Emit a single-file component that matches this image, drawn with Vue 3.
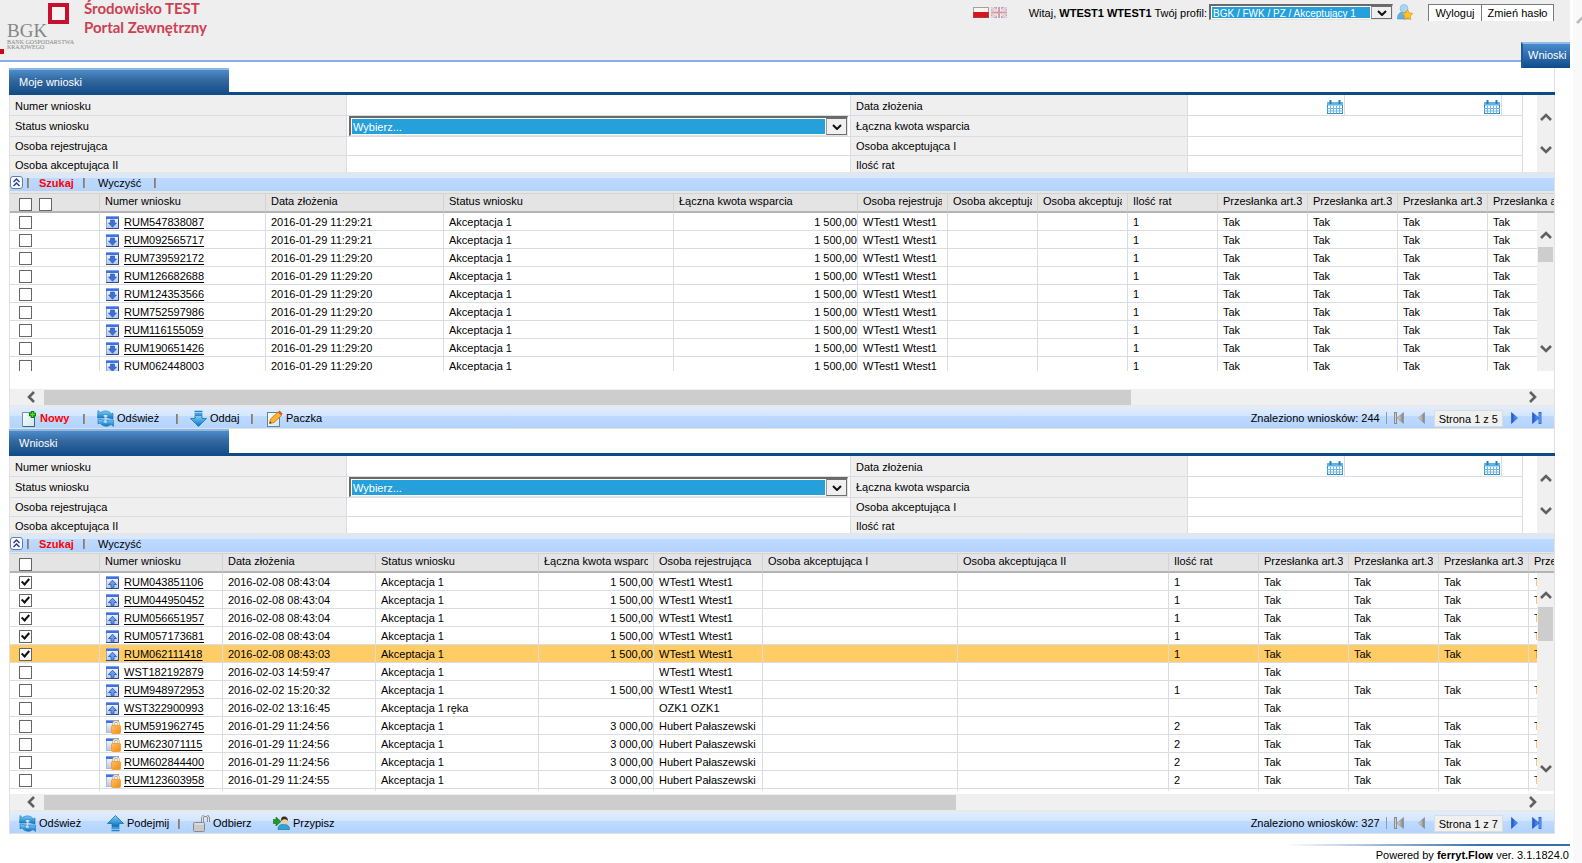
<script setup>
import { reactive } from 'vue'

const mineRows = [
  ['RUM547838087', '2016-01-29 11:29:21'],
  ['RUM092565717', '2016-01-29 11:29:21'],
  ['RUM739592172', '2016-01-29 11:29:20'],
  ['RUM126682688', '2016-01-29 11:29:20'],
  ['RUM124353566', '2016-01-29 11:29:20'],
  ['RUM752597986', '2016-01-29 11:29:20'],
  ['RUM116155059', '2016-01-29 11:29:20'],
  ['RUM190651426', '2016-01-29 11:29:20'],
  ['RUM062448003', '2016-01-29 11:29:20']
].map(([id, date]) => ({
  id, date, icon: 'row-down', checked: false, status: 'Akceptacja 1',
  amount: '1 500,00', person: 'WTest1 Wtest1', count: '1', flags: ['Tak', 'Tak', 'Tak', 'Tak']
}))

const all = ['Tak', 'Tak', 'Tak', 'Tak']
const one = ['Tak', '', '', '']
const w = 'WTest1 Wtest1'
const hp = 'Hubert Pałaszewski'
const queueRows = [
  ['RUM043851106', '2016-02-08 08:43:04', 'row-up', true, 'Akceptacja 1', '1 500,00', w, '1', all],
  ['RUM044950452', '2016-02-08 08:43:04', 'row-up', true, 'Akceptacja 1', '1 500,00', w, '1', all],
  ['RUM056651957', '2016-02-08 08:43:04', 'row-up', true, 'Akceptacja 1', '1 500,00', w, '1', all],
  ['RUM057173681', '2016-02-08 08:43:04', 'row-up', true, 'Akceptacja 1', '1 500,00', w, '1', all],
  ['RUM062111418', '2016-02-08 08:43:03', 'row-up', true, 'Akceptacja 1', '1 500,00', w, '1', all],
  ['WST182192879', '2016-02-03 14:59:47', 'row-up', false, 'Akceptacja 1', '', w, '', one],
  ['RUM948972953', '2016-02-02 15:20:32', 'row-up', false, 'Akceptacja 1', '1 500,00', w, '1', all],
  ['WST322900993', '2016-02-02 13:16:45', 'row-up', false, 'Akceptacja 1 ręka', '', 'OZK1 OZK1', '', one],
  ['RUM591962745', '2016-01-29 11:24:56', 'row-lock', false, 'Akceptacja 1', '3 000,00', hp, '2', all],
  ['RUM623071115', '2016-01-29 11:24:56', 'row-lock', false, 'Akceptacja 1', '3 000,00', hp, '2', all],
  ['RUM602844400', '2016-01-29 11:24:56', 'row-lock', false, 'Akceptacja 1', '3 000,00', hp, '2', all],
  ['RUM123603958', '2016-01-29 11:24:55', 'row-lock', false, 'Akceptacja 1', '3 000,00', hp, '2', all]
].map(([id, date, icon, checked, status, amount, person, count, flags], i) => ({
  id, date, icon, checked, status, amount, person, count, flags, selected: i === 4
}))

const columns = [
  'Numer wniosku', 'Data złożenia', 'Status wniosku', 'Łączna kwota wsparcia', 'Osoba rejestrująca',
  'Osoba akceptująca I', 'Osoba akceptująca II', 'Ilość rat',
  'Przesłanka art.3', 'Przesłanka art.3', 'Przesłanka art.3', 'Przesłanka art.3'
]

const panels = reactive([
  {
    key: 'mine', title: 'Moje wnioski', rows: mineRows, selectors: 2, closingBar: true,
    found: 'Znaleziono wniosków: 244', page: 'Strona 1 z 5',
    actions: [
      { icon: 'new', text: 'Nowy', hot: true }, null,
      { icon: 'refresh', text: 'Odśwież' }, null,
      { icon: 'give', text: 'Oddaj' }, null,
      { icon: 'edit', text: 'Paczka' }
    ]
  },
  {
    key: 'queue', title: 'Wnioski', rows: queueRows, selectors: 1, closingBar: false,
    found: 'Znaleziono wniosków: 327', page: 'Strona 1 z 7',
    actions: [
      { icon: 'refresh', text: 'Odśwież' },
      { icon: 'take', text: 'Podejmij' }, null,
      { icon: 'unlock', text: 'Odbierz' },
      { icon: 'assign', text: 'Przypisz' }
    ]
  }
])
</script>

<template>
  <div class="page">
    <svg class="defs" aria-hidden="true">
      <defs>
        <linearGradient id="gBlue" x1="0" y1="0" x2="0" y2="1">
          <stop offset="0" stop-color="#7ed3f7" /><stop offset="1" stop-color="#0b6fc2" />
        </linearGradient>
        <linearGradient id="gPaper" x1="0" y1="0" x2="1" y2="1">
          <stop offset="0" stop-color="#ffffff" /><stop offset="1" stop-color="#cfe6ee" />
        </linearGradient>
        <linearGradient id="gWin" x1="0" y1="0" x2="0" y2="1">
          <stop offset="0" stop-color="#ffffff" /><stop offset="1" stop-color="#b4c8ea" />
        </linearGradient>
        <linearGradient id="gLock" x1="0" y1="0" x2="1" y2="1">
          <stop offset="0" stop-color="#ffc068" /><stop offset="1" stop-color="#f08a10" />
        </linearGradient>
        <linearGradient id="gGrey" x1="0" y1="0" x2="1" y2="0">
          <stop offset="0" stop-color="#e4e4e4" /><stop offset="1" stop-color="#7d7d7d" />
        </linearGradient>
        <linearGradient id="gNav" x1="0" y1="0" x2="1" y2="0">
          <stop offset="0" stop-color="#1c50c8" /><stop offset="1" stop-color="#5fa8ff" />
        </linearGradient>
      </defs>
      <symbol id="row-down" viewBox="0 0 13 13">
        <rect x="0.5" y="0.5" width="12" height="12" fill="url(#gWin)" stroke="#8ea6d8" />
        <rect width="13" height="3" fill="#3f72e0" /><rect width="13" height="1" fill="#7ba0f2" />
        <path d="M12.5 3v9.500H0" fill="none" stroke="#2f4a86" />
        <path d="M4.500 4h4v3h2L6.500 11.300 2.500 7h2z" fill="#3a6fe0" stroke="#2450a8" stroke-width=".6" />
      </symbol>
      <symbol id="row-up" viewBox="0 0 13 13">
        <rect x="0.5" y="0.5" width="12" height="12" fill="url(#gWin)" stroke="#8ea6d8" />
        <rect width="13" height="3" fill="#3f72e0" /><rect width="13" height="1" fill="#7ba0f2" />
        <path d="M12.5 3v9.500H0" fill="none" stroke="#2f4a86" />
        <path d="M5 11.300h3V8.500h2.500L6.500 4.200 2.500 8.500H5z" fill="#6c9cf0" stroke="#2450a8" stroke-width=".8" />
      </symbol>
      <symbol id="row-lock" viewBox="0 0 15 14">
        <rect x="0.5" y="0.500" width="12" height="12" fill="url(#gWin)" stroke="#a9b8dc" />
        <rect width="13" height="3" fill="#3f72e0" /><rect width="13" height="1" fill="#7ba0f2" />
        <path d="M7.500 6V4a2.500 2.500 0 0 1 5 0V6" fill="none" stroke="#b5a98c" stroke-width="2.400" />
        <path d="M7.500 6V4a2.500 2.500 0 0 1 5 0V6" fill="none" stroke="#f4ecd8" stroke-width="1.200" />
        <rect x="5.500" y="5.500" width="9" height="8" rx="1" fill="url(#gLock)" stroke="#f5a030" />
      </symbol>
      <symbol id="new" viewBox="0 0 17 17">
        <path d="M2.500 2.500h9l3 3v11h-12z" fill="url(#gPaper)" stroke="#6d93a3" />
        <path d="M14.500 5v11.500H3" fill="none" stroke="#3f6677" />
        <path d="M12.500 1v7M9 4.500h7" stroke="#0a7d0a" stroke-width="3.500" />
        <path d="M12.500 2v5M10 4.500h5" stroke="#4fe02f" stroke-width="1.500" />
      </symbol>
      <symbol id="refresh" viewBox="0 0 17 17">
        <path d="M1 .5l2.500 2C7 0 12 .5 14.500 4L16 3v6l-6.500-1.500 2-1.500C10 4 7 4 6 5.500L7.500 8H.5z" fill="url(#gBlue)" stroke="#1876b8" stroke-width=".6" />
        <path d="M16.500 16.500L14 14.500c-3.500 3-8.500 2-11-1.500l-2 1V9l6.500 1-2 1.800c1.500 2 4 2 5.500.7L9.500 10h7z" fill="url(#gBlue)" stroke="#1876b8" stroke-width=".6" />
      </symbol>
      <symbol id="give" viewBox="0 0 17 17">
        <path d="M4.500 1.500h8M4.500 4h8" stroke="#1d84c6" stroke-width="1.500" />
        <path d="M5 5.500h7v3h4.500L8.500 16.500 .5 8.500H5z" fill="url(#gBlue)" stroke="#1670b0" stroke-width=".8" />
      </symbol>
      <symbol id="take" viewBox="0 0 17 17">
        <path d="M4.500 15.500h8M4.500 13h8" stroke="#1d84c6" stroke-width="1.500" />
        <path d="M5 11.500h7v-3h4.500L8.500 .5 .5 8.500H5z" fill="url(#gBlue)" stroke="#1670b0" stroke-width=".8" />
      </symbol>
      <symbol id="edit" viewBox="0 0 17 17">
        <rect x="1.500" y="2.500" width="12" height="14" fill="url(#gPaper)" stroke="#5b8796" />
        <path d="M3.500 13.500l1-4.500L12 2l3.500 3.500-7.500 7z" fill="#ffb52e" stroke="#c56a10" stroke-width=".8" />
        <path d="M12 2l1.500-1.500L16.500 3.500 15.500 5.500z" fill="#e2553c" />
        <path d="M3.500 13.500l.5-2 1.500 1.500z" fill="#333" />
      </symbol>
      <symbol id="unlock" viewBox="0 0 17 17">
        <path d="M9.500 8V3.500a3 3 0 0 1 6 0V7" fill="none" stroke="#6f6f6f" stroke-width="2.600" />
        <path d="M9.500 8V3.500a3 3 0 0 1 6 0V7" fill="none" stroke="#e4e4e4" stroke-width="1.200" />
        <rect x="0.500" y="7.500" width="11" height="9" rx="1" fill="#c9c9c9" stroke="#8a8a8a" />
        <path d="M1.500 9h9" stroke="#f0f0f0" />
      </symbol>
      <symbol id="assign" viewBox="0 0 17 17">
        <path d="M5 14.500c0-4 2-5 5.500-5s6 1 6 5z" fill="#2ea6cf" stroke="#177ba3" stroke-width=".7" />
        <circle cx="11.500" cy="6" r="3.200" fill="#f2c9a0" />
        <path d="M8 6c0-4 1.500-4.500 3.500-4.500S15 3 15 6c-1.500-2-4.500-2.500-7 0z" fill="#3b2a20" />
        <path d="M.3 4.500h2.700V2L8 6.500 3 11V8.500H.3z" fill="#1f9a2a" stroke="#0c6b18" stroke-width=".6" />
      </symbol>
      <symbol id="calendar" viewBox="0 0 16 14">
        <rect x="0.5" y="3" width="15" height="10.500" fill="#fff" stroke="#2b8fd0" />
        <rect y="2" width="16" height="3.500" rx="1" fill="#5fb3e6" />
        <path d="M3.500 0v4M12.500 0v4" stroke="#2b7cb8" stroke-width="2" />
        <path d="M3.500 5.500v8M6.500 5.500v8M9.500 5.500v8M12.500 5.500v8M0 8.500h16M0 11h16" stroke="#6fb9e4" />
      </symbol>
      <symbol id="collapse" viewBox="0 0 13 13">
        <rect x="0.5" y="0.500" width="12" height="12" rx="2.500" fill="#fff" stroke="#5f7fae" />
        <path d="M3.500 6l3-3 3 3M3.500 10l3-3 3 3" fill="none" stroke="#27418f" stroke-width="1.500" />
      </symbol>
      <symbol id="chev" viewBox="0 0 12 10">
        <path d="M1 8l5-5 5 5" fill="none" stroke="#606060" stroke-width="2.600" />
      </symbol>
      <symbol id="first" viewBox="0 0 10 12">
        <rect x="0.5" y="0.500" width="2" height="11" fill="#d0d0d0" stroke="#8b8b8b" />
        <path d="M9.500.5v11L3 6z" fill="url(#gGrey)" stroke="#8b8b8b" stroke-width=".6" />
      </symbol>
      <symbol id="prev" viewBox="0 0 7 12">
        <path d="M6.500.5v11L.5 6z" fill="url(#gGrey)" stroke="#8b8b8b" stroke-width=".6" />
      </symbol>
      <symbol id="next" viewBox="0 0 7 12">
        <path d="M.5.5v11l6-5.500z" fill="url(#gNav)" stroke="#1c50c8" stroke-width=".6" />
      </symbol>
      <symbol id="last" viewBox="0 0 10 12">
        <path d="M.5.5v11l6.500-5.500z" fill="url(#gNav)" stroke="#1c50c8" stroke-width=".6" />
        <rect x="7" y="0.500" width="2" height="11" fill="#7cb4ff" stroke="#1c50c8" stroke-width=".8" />
      </symbol>
    </svg>

    <div class="main">
      <header class="top">
        <div class="brand">
          <div class="logo">
            <svg class="mark" viewBox="0 0 21 21" aria-hidden="true">
              <rect x="2" y="2" width="17" height="17" fill="#f3f3f3" stroke="#c8102e" stroke-width="4" />
            </svg>
            <div class="bgk">BGK</div>
            <div class="bank">BANK GOSPODARSTWA<br />KRAJOWEGO</div>
            <span class="dot"></span>
          </div>
          <h1>Środowisko TEST<br />Portal Zewnętrzny</h1>
        </div>
        <div class="user">
          <button class="flag" type="button" aria-label="Polski">
            <svg viewBox="0 0 16 11"><rect width="16" height="11" fill="#f6f6f6" /><rect y="5" width="16" height="6" fill="#d8141c" /><rect x="0.5" y="0.500" width="15" height="10" fill="none" stroke="#8d5a5a" stroke-opacity=".6" /></svg>
          </button>
          <button class="flag" type="button" aria-label="English">
            <svg viewBox="0 0 16 11">
              <rect width="16" height="11" fill="#a9acc9" />
              <path d="M0 0l16 11M16 0L0 11" stroke="#eee" stroke-width="2.500" />
              <path d="M0 0l16 11M16 0L0 11" stroke="#dba3a8" stroke-width=".8" />
              <path d="M8 0v11M0 5.500h16" stroke="#f2eeee" stroke-width="4" />
              <path d="M8 0v11M0 5.500h16" stroke="#dc989e" stroke-width="2" />
            </svg>
          </button>
          <label class="hello" for="profile">Witaj, <b>WTEST1 WTEST1</b> Twój profil:</label>
          <span class="combo small">
            <select id="profile"><option>BGK / FWK / PZ / Akceptujący 1</option></select>
            <span class="drop"><svg viewBox="0 0 10 6"><path d="M1 1l4 4 4-4" /></svg></span>
          </span>
          <button class="fav" type="button" aria-label="Profil domyślny">
            <svg viewBox="0 0 16 16">
              <path d="M.5 15c0-5 2-7 6-7s6 2 6 7z" fill="#5fb0e6" stroke="#4a92cc" stroke-width=".6" />
              <circle cx="7" cy="4.500" r="4" fill="#a8d6f4" stroke="#7ab6e0" stroke-width=".6" />
              <path d="M10.500 5.500l1.700 3.300 3.600.6-2.600 2.600.6 3.600-3.300-1.700-3.300 1.700.6-3.600-2.600-2.600 3.600-.6z" fill="#ffc423" stroke="#e58e12" stroke-width=".7" />
            </svg>
          </button>
          <button class="plain out" type="button">Wyloguj</button>
          <button class="plain pass" type="button">Zmień hasło</button>
        </div>
        <a class="nav" href="#wnioski">Wnioski</a>
      </header>

      <main class="content">
        <section v-for="p in panels" :key="p.key" class="panel" :class="p.key">
          <div class="tabs"><h2>{{ p.title }}</h2></div>

          <div class="filter">
            <div class="fields">
              <label :for="p.key + '-nr'">Numer wniosku</label>
              <div class="val"><input :id="p.key + '-nr'" type="text" /></div>
              <label :for="p.key + '-date'">Data złożenia</label>
              <div class="val dates">
                <div class="date"><input :id="p.key + '-date'" type="text" /><button type="button" aria-label="Data od"><svg><use href="#calendar" /></svg></button></div>
                <div class="date"><input type="text" aria-label="Data do" /><button type="button" aria-label="Wybierz datę do"><svg><use href="#calendar" /></svg></button></div>
              </div>
              <label :for="p.key + '-status'">Status wniosku</label>
              <div class="val">
                <span class="combo">
                  <select :id="p.key + '-status'"><option>Wybierz...</option></select>
                  <span class="drop"><svg viewBox="0 0 10 6"><path d="M1 1l4 4 4-4" /></svg></span>
                </span>
              </div>
              <label :for="p.key + '-sum'">Łączna kwota wsparcia</label>
              <div class="val"><input :id="p.key + '-sum'" type="text" /></div>
              <label :for="p.key + '-reg'">Osoba rejestrująca</label>
              <div class="val"><input :id="p.key + '-reg'" type="text" /></div>
              <label :for="p.key + '-a1'">Osoba akceptująca I</label>
              <div class="val"><input :id="p.key + '-a1'" type="text" /></div>
              <label :for="p.key + '-a2'">Osoba akceptująca II</label>
              <div class="val"><input :id="p.key + '-a2'" type="text" /></div>
              <label :for="p.key + '-cnt'">Ilość rat</label>
              <div class="val"><input :id="p.key + '-cnt'" type="text" /></div>
            </div>
            <div class="vscroll">
              <svg><use href="#chev" /></svg>
              <svg class="down"><use href="#chev" /></svg>
            </div>
          </div>

          <div class="searchbar">
            <button type="button" aria-label="Zwiń"><svg class="fold"><use href="#collapse" /></svg></button>
            <i class="sep"></i>
            <button type="button" class="hot">Szukaj</button>
            <i class="sep"></i>
            <button type="button">Wyczyść</button>
            <i v-if="p.closingBar" class="sep"></i>
          </div>

          <div class="grid">
            <div class="view">
              <table>
                <colgroup>
                  <col class="c-check" /><col class="c-nr" /><col class="c-date" /><col class="c-status" />
                  <col class="c-sum" /><col class="c-reg" /><col class="c-a1" /><col class="c-a2" />
                  <col v-for="n in 5" :key="n" class="c-flag" />
                </colgroup>
                <thead>
                  <tr>
                    <th class="pick"><input v-for="n in p.selectors" :key="n" type="checkbox" :aria-label="'Zaznacz wszystkie ' + n" /></th>
                    <th v-for="(c, i) in columns" :key="i"><div>{{ c }}</div></th>
                  </tr>
                </thead>
                <tbody>
                  <tr v-for="r in p.rows" :key="r.id" :class="{ selected: r.selected }">
                    <td class="pick"><input v-model="r.checked" type="checkbox" :aria-label="r.id" /></td>
                    <td class="nr"><div><svg class="rowicon" :class="r.icon"><use :href="'#' + r.icon" /></svg><a href="#wniosek">{{ r.id }}</a></div></td>
                    <td>{{ r.date }}</td>
                    <td>{{ r.status }}</td>
                    <td class="sum">{{ r.amount }}</td>
                    <td>{{ r.person }}</td>
                    <td></td>
                    <td></td>
                    <td>{{ r.count }}</td>
                    <td v-for="(f, i) in r.flags" :key="i">{{ f }}</td>
                  </tr>
                  <tr><td v-for="n in 13" :key="n"></td></tr>
                </tbody>
              </table>
            </div>
            <div class="vscroll over">
              <svg><use href="#chev" /></svg>
              <span class="thumb"></span>
              <svg class="down"><use href="#chev" /></svg>
            </div>
          </div>

          <div class="hscroll">
            <svg class="left"><use href="#chev" /></svg>
            <div class="track"><span class="thumb"></span></div>
            <svg class="right"><use href="#chev" /></svg>
          </div>

          <div class="footbar">
            <div class="actions">
              <template v-for="(a, i) in p.actions" :key="i">
                <button v-if="a" type="button" :class="{ hot: a.hot }"><svg><use :href="'#' + a.icon" /></svg>{{ a.text }}</button>
                <i v-else class="sep"></i>
              </template>
            </div>
            <div class="pager">
              <span class="found">{{ p.found }}</span>
              <button type="button" class="end" aria-label="Pierwsza strona"><svg><use href="#first" /></svg></button>
              <button type="button" class="step" aria-label="Poprzednia strona"><svg><use href="#prev" /></svg></button>
              <span class="pagebox">{{ p.page }}</span>
              <button type="button" class="step" aria-label="Następna strona"><svg><use href="#next" /></svg></button>
              <button type="button" class="end" aria-label="Ostatnia strona"><svg><use href="#last" /></svg></button>
            </div>
          </div>
        </section>
      </main>

      <footer class="credit">Powered by <b>ferryt.Flow</b> ver. 3.1.1824.0</footer>
    </div>
    <div class="pagescroll"><svg><use href="#chev" /></svg></div>
  </div>
</template>

<style>
html, body { height: 100%; overflow: hidden; background: #fff; }
#app { height: 100%; }
</style>

<style scoped>
.page { display: flex; min-height: 100%; font: 11px/14px "Liberation Sans", Arial, sans-serif; color: #000; background: #fff; }
.page *, .page *::before, .page *::after { box-sizing: border-box; }
.defs { position: absolute; width: 0; height: 0; }
svg { display: block; flex: none; }
button { appearance: none; border: 0; margin: 0; padding: 0; background: none; font: inherit; color: inherit; white-space: nowrap; }
input[type="text"] { appearance: none; border: 0; margin: 0; padding: 0 4px; width: 100%; height: 100%; min-width: 0; background: transparent; font: inherit; outline: 0; }
.hot { color: #f00; font-weight: bold; }
.main { flex: 1; min-width: 0; }

.pagescroll { width: 9px; margin-left: 3px; background: #f9f9f9; overflow: hidden; padding: 15px 0 0 3px; }
.pagescroll svg { width: 12px; height: 10px; opacity: .4; }

.top { position: relative; display: flex; justify-content: space-between; align-items: flex-start; height: 62px; background: #eee; border-bottom: 2px solid #88ade8; }
.brand { display: flex; }
.logo { position: relative; width: 84px; height: 56px; padding: 22px 0 0 7px; color: #868686; font-family: "Liberation Serif", serif; }
.mark { position: absolute; left: 48px; top: 3px; width: 21px; height: 21px; }
.bgk { font-size: 19px; line-height: 18px; }
.bank { font-size: 6px; line-height: 5px; white-space: nowrap; }
.dot { position: absolute; left: 0; top: 49px; width: 4px; height: 5px; background: #d0021b; }
h1 { margin: -1px 0 0; font: bold 15px/19px Lato, Carlito, sans-serif; color: #cb4154; }
.user { display: flex; align-items: center; height: 17px; margin: 4px 16px 0 0; }
.flag svg { width: 16px; height: 11px; }
.flag + .flag { margin-left: 2px; }
.hello { margin: 0 2px 0 22px; white-space: nowrap; }
.fav { margin: 0 15px 0 4px; align-self: flex-start; }
.fav svg { width: 16px; height: 16px; }
.plain { height: 17px; background: #fff; border: 1px solid #7b7b7b; border-width: 1px 0 0 1px; text-align: center; }
.out { width: 53px; }
.pass { width: 73px; border-right-width: 1px; }
.nav { position: absolute; right: 0; top: 42px; width: 49px; height: 26px; padding-left: 5px; color: #fff; line-height: 23px; text-decoration: none; background: linear-gradient(#4a8bcb, #104b8a); border-top: 2px solid #8fbce8; border-left: 2px solid #1c5a9b; }

.combo { position: relative; display: block; height: 100%; padding: 1px; background: #fff; border: 2px solid #696969; border-right: 1px solid #e3e3e3; border-bottom: 1px solid #e3e3e3; }
.combo select { appearance: none; display: block; width: 100%; height: 100%; margin: 0; padding: 0 22px 0 1px; border: 0; border-radius: 0; background: #26a0da; color: #fff; font: inherit; outline: 0; }
.drop { position: absolute; top: 0; right: 0; bottom: 0; width: 21px; display: flex; align-items: center; justify-content: center; background: #f0f0f0; border: 1px solid #6f6f6f; border-left: 1px solid #9a9a9a; box-shadow: -1px 0 #fff; pointer-events: none; }
.drop svg { width: 10px; height: 6px; }
.drop path { fill: none; stroke: #111; stroke-width: 2; }
.small { width: 184px; height: 16px; align-self: flex-start; }
.small select { font-size: 10px; }

.content { padding: 6px 15px 0 9px; }
.panel { border: 1px solid #e2e2e2; border-width: 0 1px 1px; }
.tabs { margin: 0 -1px; height: 27px; border-bottom: 3px solid #0f4a87; }
h2 { position: relative; width: 220px; height: 27px; margin: 0; padding-left: 10px; font: 11px/25px "Liberation Sans", Arial, sans-serif; color: #fff; border-top: 2px solid #8db8e2; background: linear-gradient(#4c8ccc, #34699f 40%, #0f4a87); }

.filter { display: flex; }
.fields { flex: 1; min-width: 0; display: grid; grid-template-columns: minmax(0, 337fr) minmax(0, 504fr) minmax(0, 337fr) minmax(0, 334fr); grid-template-rows: 21px 21px 19px 16px; margin-right: 14px; border-right: 1px solid #d9dce1; overflow: hidden; }
.fields label { display: flex; align-items: center; padding-left: 5px; background: #efefef; border: 1px solid #d9dce1; border-width: 0 1px 1px 0; }
.val { min-width: 0; border: 1px solid #d9dce1; border-width: 0 1px 1px 0; }
.fields > :nth-child(-n + 4), .fields > :nth-child(n + 13) { padding-top: 2px; }
.fields > :nth-child(4n) { border-right: 0; }
.fields > :nth-child(n + 13) { border-bottom: 0; }
.val .combo { margin: 0 2px 0 2px; }
.dates { display: flex; padding-right: 20px; }
.fields > .dates { padding-top: 0; }
.date { flex: 1; min-width: 0; display: flex; align-items: center; padding: 3px 1px 0 0; border-right: 1px solid #d9dce1; }
.date svg { width: 16px; height: 14px; }

.vscroll { display: flex; flex-direction: column; align-items: center; width: 17px; padding: 17px 0; background: #f0f0f0; }
.vscroll svg { width: 12px; height: 10px; }
.vscroll .thumb { width: 15px; margin-top: 7px; background: #cdcdcd; }
.mine .thumb { height: 15px; }
.queue .thumb { height: 34px; }
.down { margin-top: auto; transform: rotate(180deg); }
.over { position: absolute; top: 20px; right: 0; bottom: 0; }

.searchbar { display: grid; grid-template-columns: 17px 12px 44px 15px 56px 12px; align-items: center; height: 21px; background: linear-gradient(#d9e8fd 4px, #bfdaff 4px, #b3d3fd); border-top: 2px solid #e6e6e6; border-bottom: 2px solid #e6e6e6; }
.queue .searchbar { height: 20px; border-bottom-width: 1px; }
.searchbar button { text-align: left; }
.fold { width: 13px; height: 13px; }
.sep { width: 2px; height: 10px; border-left: 1px solid #5f86b4; border-right: 1px solid #bb8a4c; }

.grid { position: relative; }
.view { overflow: hidden; height: 178px; }
.queue .view { height: 238px; }
table { table-layout: fixed; width: 1568px; border-collapse: separate; border-spacing: 0; }
.c-check { width: 90px; } .c-nr { width: 166px; } .c-date { width: 178px; } .c-status { width: 230px; }
.c-sum { width: 184px; } .c-reg, .c-a1, .c-a2, .c-flag { width: 90px; }
.queue table { width: 1609px; }
.queue .c-nr { width: 123px; } .queue .c-date { width: 153px; } .queue .c-status { width: 163px; }
.queue .c-sum { width: 115px; } .queue .c-reg { width: 109px; } .queue .c-a1 { width: 195px; } .queue .c-a2 { width: 211px; }
th { height: 20px; padding: 0 5px; vertical-align: top; text-align: left; font-weight: normal; line-height: 15px; background: #e4e4e4; border: 1px solid #d3d3d3; border-width: 1px 1px 2px 0; border-bottom-color: #b4b4b4; }
th div { overflow: hidden; white-space: nowrap; }
td { height: 18px; padding: 2px 5px 0; line-height: 15px; white-space: nowrap; border: 1px solid #d9dce1; border-width: 0 1px 1px 0; }
.sum { padding-right: 0; text-align: right; }
.selected td { background: #fc6; }
.pick { padding: 0 0 0 9px; }
td.pick { vertical-align: top; }
th.pick { padding-top: 4px; }
.pick input { appearance: none; float: left; position: relative; width: 13px; height: 13px; margin: 0 7px 0 0; background: #fff; border: 1px solid #666; }
td.pick input { margin-top: 3px; }
.pick input:checked::after { content: ""; position: absolute; left: 3px; top: 0; width: 5px; height: 8px; border: solid #111; border-width: 0 2px 2px 0; transform: rotate(42deg); }
.nr div { display: flex; align-items: center; gap: 5px; padding-left: 1px; height: 15px; }
.nr a { color: #000; text-decoration: underline; text-underline-offset: 2px; }
.rowicon { width: 13px; height: 13px; }
.rowicon.row-lock { width: 15px; height: 14px; margin-right: -2px; }

.hscroll { display: flex; align-items: center; height: 18px; margin-top: 18px; padding: 0 15px; background: #f0f0f0; border-bottom: 2px solid #e9e9e9; }
.queue .hscroll { margin-top: 3px; }
.hscroll svg { width: 12px; height: 10px; }
.left { transform: rotate(-90deg); }
.right { transform: rotate(90deg); }
.track { flex: 1; height: 16px; margin: 0 8px 0 7px; padding-top: 1px; }
.track .thumb { display: block; width: 73.7%; height: 15px; background: #cdcdcd; }
.queue .track .thumb { width: 61.8%; height: 15px; }

.footbar { display: flex; justify-content: space-between; height: 21px; background: linear-gradient(#e0edff, #d3e5fd 9px, #bfdaff 9px, #b3d3fd); }
.actions { display: grid; align-items: center; padding: 2px 0 0 10px; grid-template-columns: 63px 14px 79px 14px 61px 15px auto; }
.queue .actions { padding-left: 9px; grid-template-columns: 88px 71px 15px 80px auto; }
.actions button { display: flex; align-items: center; gap: 3px; line-height: 17px; }
.actions svg { width: 17px; height: 17px; }
.pager { display: flex; align-items: center; padding-right: 12px; }
.found { padding-right: 6px; border-right: 1px solid #8f9aa8; line-height: 12px; }
.end svg { width: 10px; height: 12px; }
.step svg { width: 7px; height: 12px; }
.pager .end { margin-left: 7px; }
.pager .step { margin: 0 9px 0 14px; }
.pagebox { margin-top: 2px; padding: 1px 4px 0; line-height: 14px; background: #f0f0f0; border: 1px solid #dcdcdc; }
.pager .pagebox ~ .step { margin: 0 7px 0 8px; }

.credit { position: relative; margin-top: 10px; padding: 4px 1px 0 0; text-align: right; }
.credit::before { content: ""; position: absolute; top: 0; right: 0; width: 285px; height: 2px; background: linear-gradient(90deg, #fff, #3a6ea8 70%); }
</style>
